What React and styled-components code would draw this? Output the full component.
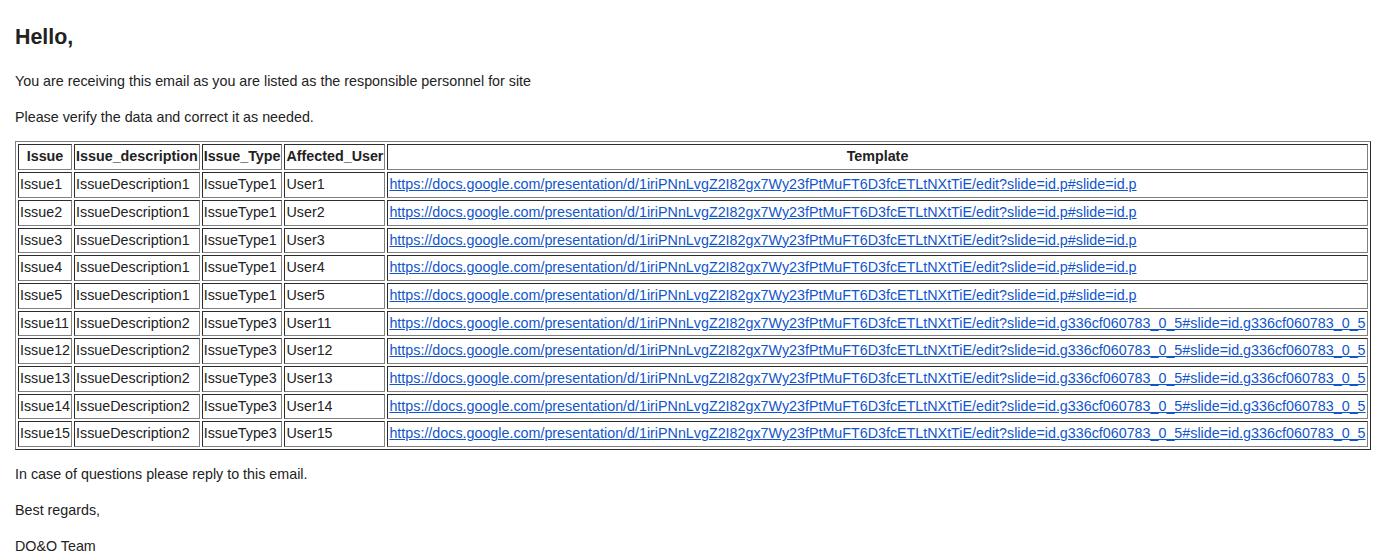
import React from "react";
import styled, { createGlobalStyle } from "styled-components";

const Global = createGlobalStyle`
  html, body { margin: 0; padding: 0; background: #ffffff; }
  body {
    font-family: "Liberation Sans", Arial, sans-serif;
    font-size: 14.3px;
    color: #222222;
  }
`;

const Mail = styled.div`
  padding: 0 15px;
  line-height: 21.7px;
`;

const Heading = styled.h2`
  font-size: 21.4px;
  font-weight: bold;
  line-height: 32px;
  margin: 21px 0 18px;
`;

const Para = styled.p`
  margin: ${(p) => (p.$tight ? "14px 0 13px" : "14px 0")};
  &:first-of-type { margin-top: 0; }
`;

const Table = styled.table`
  border: 1px outset #808080;
  border-spacing: 2px;
  border-collapse: separate;
  margin: 0;
  font-size: 14.3px;
`;

const Th = styled.th`
  border: 1px inset #808080;
  padding: 1px;
  font-weight: bold;
  text-align: center;
  white-space: nowrap;
`;

const Td = styled.td`
  border: 1px inset #808080;
  padding: 1px;
  text-align: left;
  white-space: nowrap;
`;

const Link = styled.a`
  color: #1155cc;
  text-decoration: underline;
`;

const base = "https://docs.google.com/presentation/d/1iriPNnLvgZ2I82gx7Wy23fPtMuFT6D3fcETLtNXtTiE/edit?slide=";
const urlA = base + "id.p#slide=id.p";
const urlB = base + "id.g336cf060783_0_5#slide=id.g336cf060783_0_5";

const rows = [
  ["Issue1", "IssueDescription1", "IssueType1", "User1", urlA],
  ["Issue2", "IssueDescription1", "IssueType1", "User2", urlA],
  ["Issue3", "IssueDescription1", "IssueType1", "User3", urlA],
  ["Issue4", "IssueDescription1", "IssueType1", "User4", urlA],
  ["Issue5", "IssueDescription1", "IssueType1", "User5", urlA],
  ["Issue11", "IssueDescription2", "IssueType3", "User11", urlB],
  ["Issue12", "IssueDescription2", "IssueType3", "User12", urlB],
  ["Issue13", "IssueDescription2", "IssueType3", "User13", urlB],
  ["Issue14", "IssueDescription2", "IssueType3", "User14", urlB],
  ["Issue15", "IssueDescription2", "IssueType3", "User15", urlB],
];

export default function App() {
  return (
    <Mail>
      <Global />
      <Heading>Hello,</Heading>
      <Para>You are receiving this email as you are listed as the responsible personnel for site</Para>
      <Para $tight>Please verify the data and correct it as needed.</Para>
      <Table>
        <thead>
          <tr>
            <Th>Issue</Th>
            <Th>Issue_description</Th>
            <Th>Issue_Type</Th>
            <Th>Affected_User</Th>
            <Th>Template</Th>
          </tr>
        </thead>
        <tbody>
          {rows.map((r) => (
            <tr key={r[0]}>
              <Td>{r[0]}</Td>
              <Td>{r[1]}</Td>
              <Td>{r[2]}</Td>
              <Td>{r[3]}</Td>
              <Td>
                <Link href={r[4]}>{r[4]}</Link>
              </Td>
            </tr>
          ))}
        </tbody>
      </Table>
      <Para>In case of questions please reply to this email.</Para>
      <Para>Best regards,</Para>
      <Para>DQ&amp;O Team</Para>
    </Mail>
  );
}
